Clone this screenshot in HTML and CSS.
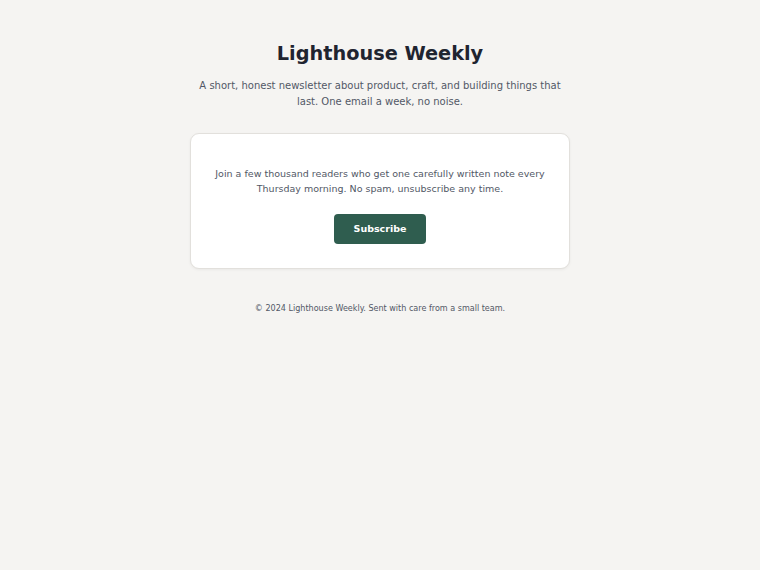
FILE: index.html
```html
<!DOCTYPE html>
<html lang="en">
<head>
    <meta charset="UTF-8">
    <meta name="viewport" content="width=device-width, initial-scale=1.0">
    <title>Lighthouse Weekly</title>
    <link rel="stylesheet" href="styles.css">
</head>
<body>
    <main class="page">
        <header class="intro">
            <h1>Lighthouse Weekly</h1>
            <p class="tagline">A short, honest newsletter about product, craft, and building things that last. One email a week, no noise.</p>
        </header>

        <!-- Signup card -->
        <section class="card">
            <p class="pitch">Join a few thousand readers who get one carefully written note every Thursday morning. No spam, unsubscribe any time.</p>
            <button class="subscribe" type="button">Subscribe</button>
        </section>

        <footer class="footer">&copy; 2024 Lighthouse Weekly. Sent with care from a small team.</footer>
    </main>
</body>
</html>
```

FILE: styles.css
```css
body {
    margin: 0;
    background: #f5f4f2;
    font-family: 'DejaVu Sans', sans-serif;
    color: #1f2430;
}
.page {
    max-width: 380px;
    margin: 0 auto;
    padding: 40px 0;
    text-align: center;
}
.intro h1 {
    margin: 0;
    font-size: 19.3px;
    line-height: 28px;
    font-weight: bold;
    color: #1f2430;
}
.tagline {
    margin: 10px 0 0;
    font-size: 10px;
    line-height: 16px;
    color: #525866;
}
.card {
    margin-top: 23px;
    background: #fff;
    border: 1px solid #e2e0dc;
    border-radius: 9px;
    box-shadow: 0 1px 3px rgba(0, 0, 0, 0.05);
    padding: 32px 24px 24px;
}
.pitch {
    margin: 0;
    font-size: 9.5px;
    line-height: 15px;
    color: #525866;
}
.subscribe {
    display: block;
    margin: 18px auto 0;
    padding: 9px 20px;
    border: none;
    border-radius: 4px;
    background: #2f5d4f;
    color: #fff;
    font-family: inherit;
    font-size: 9.5px;
    line-height: 12px;
    font-weight: bold;
    cursor: pointer;
}
.footer {
    margin-top: 34px;
    font-size: 8.05px;
    line-height: 12px;
    color: #525866;
}
```
